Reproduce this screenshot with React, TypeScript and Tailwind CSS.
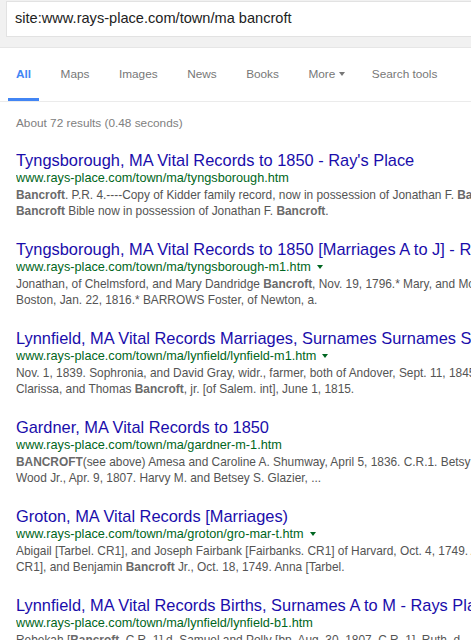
import React from 'react';

type Part = string | { b: string };

interface Result {
  title: string;
  url: string;
  arrow?: boolean;
  lines: Part[][];
}

const results: Result[] = [
  {
    title: "Tyngsborough, MA Vital Records to 1850 - Ray's Place",
    url: 'www.rays-place.com/town/ma/tyngsborough.htm',
    lines: [
      [{ b: 'Bancroft' }, '. P.R. 4.----Copy of Kidder family record, now in possession of Jonathan F. ', { b: 'Bancroft' }],
      [{ b: 'Bancroft' }, ' Bible now in possession of Jonathan F. ', { b: 'Bancroft' }, '.'],
    ],
  },
  {
    title: "Tyngsborough, MA Vital Records to 1850 [Marriages A to J] - Ray's Place",
    url: 'www.rays-place.com/town/ma/tyngsborough-m1.htm',
    arrow: true,
    lines: [
      ['Jonathan, of Chelmsford, and Mary Dandridge ', { b: 'Bancroft' }, ', Nov. 19, 1796.* Mary, and Moses'],
      ['Boston, Jan. 22, 1816.* BARROWS Foster, of Newton, a.'],
    ],
  },
  {
    title: 'Lynnfield, MA Vital Records Marriages, Surnames Surnames Surnames',
    url: 'www.rays-place.com/town/ma/lynfield/lynfield-m1.htm',
    arrow: true,
    lines: [
      ['Nov. 1, 1839. Sophronia, and David Gray, widr., farmer, both of Andover, Sept. 11, 1845'],
      ['Clarissa, and Thomas ', { b: 'Bancroft' }, ', jr. [of Salem. int], June 1, 1815.'],
    ],
  },
  {
    title: 'Gardner, MA Vital Records to 1850',
    url: 'www.rays-place.com/town/ma/gardner-m-1.htm',
    lines: [
      [{ b: 'BANCROFT' }, '(see above) Amesa and Caroline A. Shumway, April 5, 1836. C.R.1. Betsy'],
      ['Wood Jr., Apr. 9, 1807. Harvy M. and Betsey S. Glazier, ...'],
    ],
  },
  {
    title: 'Groton, MA Vital Records [Marriages)',
    url: 'www.rays-place.com/town/ma/groton/gro-mar-t.htm',
    arrow: true,
    lines: [
      ['Abigail [Tarbel. CR1], and Joseph Fairbank [Fairbanks. CR1] of Harvard, Oct. 4, 1749. Anna'],
      ['CR1], and Benjamin ', { b: 'Bancroft' }, ' Jr., Oct. 18, 1749. Anna [Tarbel.'],
    ],
  },
  {
    title: 'Lynnfield, MA Vital Records Births, Surnames A to M - Rays Place',
    url: 'www.rays-place.com/town/ma/lynfield/lynfield-b1.htm',
    lines: [
      ['Rebekah [', { b: 'Bancroft' }, ', C.R. 1] d. Samuel and Polly [bp. Aug. 30, 1807. C.R. 1]. Ruth, d.'],
    ],
  },
];

const tabs = ['All', 'Maps', 'Images', 'News', 'Books', 'More', 'Search tools'];

const App: React.FC = () => {
  return (
    <div className="w-[471px] h-[640px] overflow-hidden bg-white font-['Liberation_Sans',Arial,sans-serif]">
      {/* Search bar */}
      <div className="h-[48px] bg-[#f1f1f1] border-b border-[#e6e6e6] pl-[6px] pt-[1px]">
        <div className="h-[36px] bg-white border border-[#e2e2e2] border-r-0 flex items-center pl-[8px] text-[14.6px] text-[#222]">
          site:www.rays-place.com/town/ma bancroft
        </div>
      </div>

      {/* Tabs */}
      <div className="h-[54px] flex items-end gap-[29.5px] pl-[16px] border-b border-[#ebebeb] text-[11.8px] leading-[16px] whitespace-nowrap">
        {tabs.map((t) =>
          t === 'All' ? (
            <div key={t} className="-mx-[8px] px-[8px] pb-[16px] border-b-[3px] border-[#4285f4] text-[#4285f4] font-bold">
              {t}
            </div>
          ) : t === 'More' ? (
            <div key={t} className="pb-[19px] -mr-[3px] text-[#777] flex items-center">
              {t}
              <span className="ml-[4px] w-0 h-0 border-l-[3.5px] border-r-[3.5px] border-t-[4px] border-l-transparent border-r-transparent border-t-[#777]" />
            </div>
          ) : (
            <div key={t} className="pb-[19px] text-[#777]">
              {t}
            </div>
          )
        )}
      </div>

      {/* Results */}
      <div className="pl-[16px] pt-[13px]">
        <div className="text-[11.8px] leading-[16px] text-[#808080]">About 72 results (0.48 seconds)</div>
        <div className="mt-[19px] flex flex-col gap-[20px]">
          {results.map((r, i) => (
            <div key={i} className="whitespace-nowrap overflow-hidden">
              <div className="text-[16.4px] leading-[20px] text-[#1a0dab]">{r.title}</div>
              <div className="text-[12.7px] leading-[16px] text-[#006621] flex items-center">
                {r.url}
                {r.arrow && (
                  <span className="ml-[6px] w-0 h-0 border-l-[3.5px] border-r-[3.5px] border-t-[4px] border-l-transparent border-r-transparent border-t-[#006621]" />
                )}
              </div>
              <div className="mt-[1px] text-[11.9px] leading-[16px] text-[#545454]">
                {r.lines.map((line, j) => (
                  <div key={j}>
                    {line.map((p, k) =>
                      typeof p === 'string' ? (
                        <span key={k}>{p}</span>
                      ) : (
                        <b key={k} className="font-bold text-[#6a6a6a]">
                          {p.b}
                        </b>
                      )
                    )}
                  </div>
                ))}
              </div>
            </div>
          ))}
        </div>
      </div>
    </div>
  );
};

export default App;
